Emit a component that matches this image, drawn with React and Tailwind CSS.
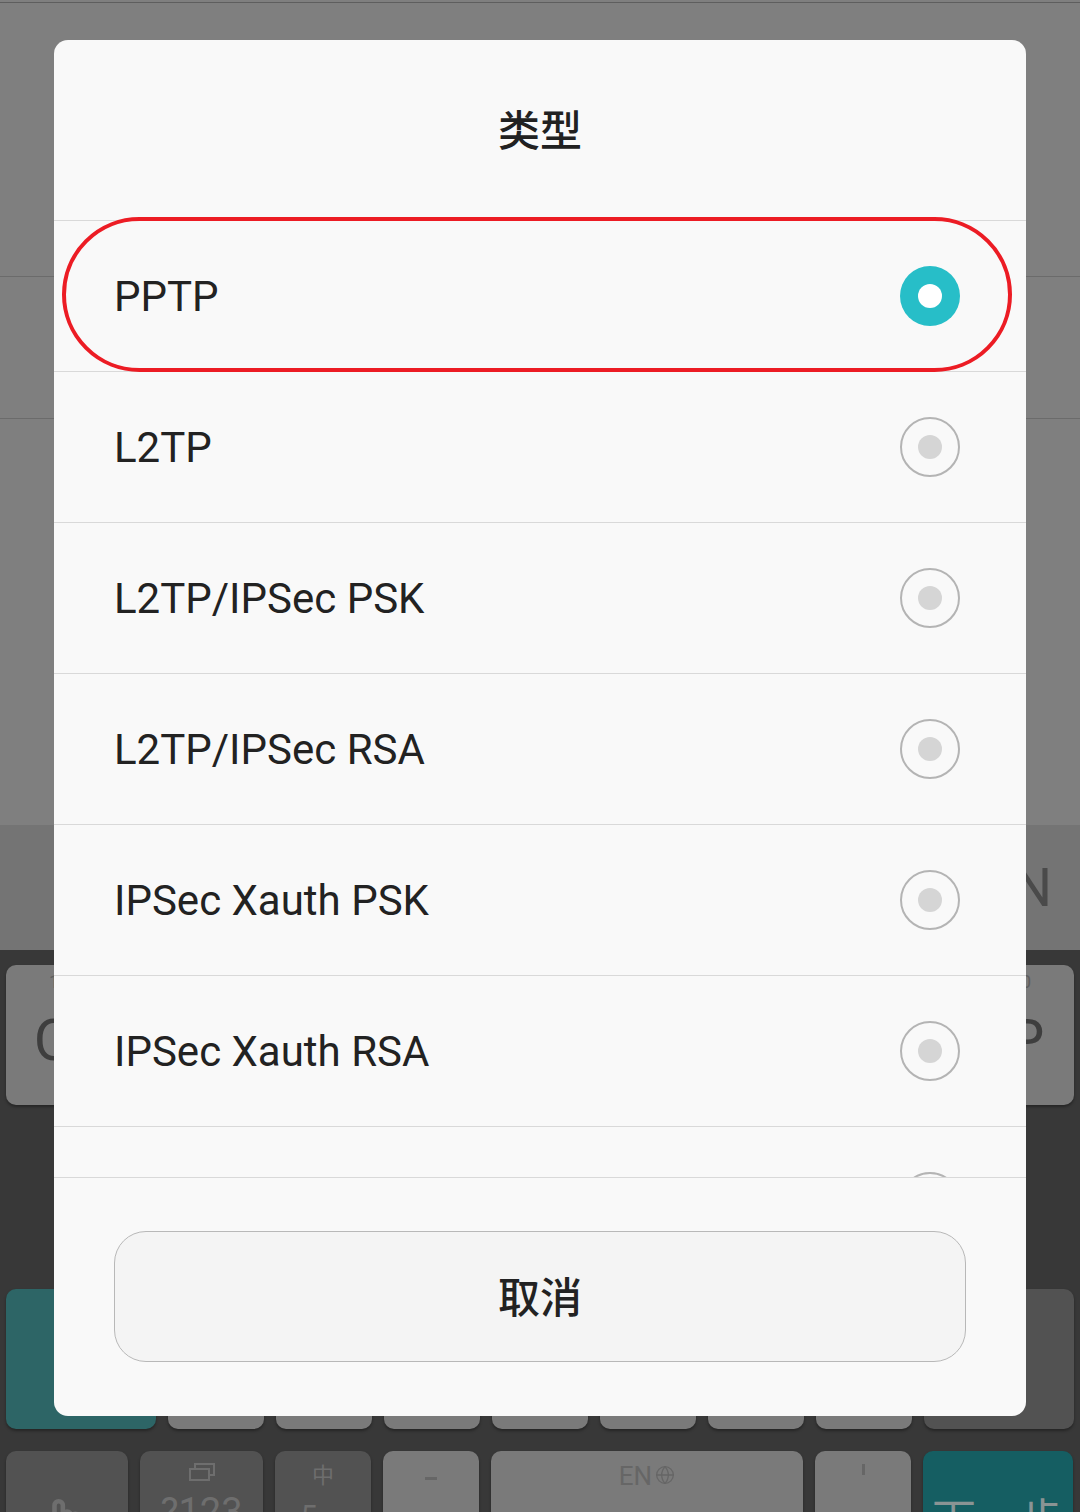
import { Delete, Pointer, Globe } from 'lucide-react';

const types = ['PPTP', 'L2TP', 'L2TP/IPSec PSK', 'L2TP/IPSec RSA', 'IPSec Xauth PSK', 'IPSec Xauth RSA', 'IPSec Hybrid RSA'];

const topRow = [
  ['Q', '1'], ['W', '2'], ['E', '3'], ['R', '4'], ['T', '5'],
  ['Y', '6'], ['U', '7'], ['I', '8'], ['O', '9'], ['P', '0'],
];

function Radio({ checked }) {
  if (checked) {
    return (
      <div className="flex h-[60px] w-[60px] items-center justify-center rounded-full bg-[#27bec8]">
        <div className="h-[24px] w-[24px] rounded-full bg-white" />
      </div>
    );
  }
  return (
    <div className="flex h-[60px] w-[60px] items-center justify-center rounded-full border-2 border-[#b4b4b4]">
      <div className="h-[24px] w-[24px] rounded-full bg-[#d5d5d5]" />
    </div>
  );
}

function Key({ className = '', children }) {
  return (
    <div className={`relative h-[140px] shrink-0 overflow-hidden rounded-[10px] shadow-[0_2px_3px_rgba(0,0,0,0.35)] ${className}`}>
      {children}
    </div>
  );
}

export default function App() {
  return (
    <div className="relative h-[1512px] w-[1080px] overflow-hidden bg-[#7f7f7f] font-['Roboto','Noto_Sans_CJK_SC',sans-serif]">
      {/* page behind the dialog */}
      <div className="flex h-full flex-col">
        <div className="h-[3px] shrink-0 border-b border-[#5e5e5e]" />
        <div className="h-[274px] shrink-0 border-b border-[#6b6b6b]" />
        <div className="h-[142px] shrink-0 border-b border-[#6b6b6b]" />
        <div className="h-[406px] shrink-0" />
        <div className="flex h-[125px] shrink-0 items-center justify-end bg-[#747474] pr-[28px] text-[54px] leading-none text-[#4a4a4a]">N</div>

        {/* keyboard */}
        <div className="flex shrink-0 flex-col gap-[22px] bg-[#383838] px-[6px] pt-[15px] pb-[20px]">
          <div className="flex gap-[12px]">
            {topRow.map(([l, n]) => (
              <Key key={l} className="flex-1 bg-[#7a7a7a]">
                <div className="pt-[8px] text-center text-[18px] leading-none text-[#5e5e5e]">{n}</div>
                <div className="pt-[20px] text-center text-[58px] leading-none text-[#3e3e3e]">{l}</div>
              </Key>
            ))}
          </div>
          <div className="flex justify-center gap-[12px]">
            {['A', 'S', 'D', 'F', 'G', 'H', 'J', 'K', 'L'].map((l) => (
              <Key key={l} className="w-[96px] bg-[#7a7a7a]" />
            ))}
          </div>
          <div className="flex gap-[12px]">
            <Key className="w-[150px] bg-[#2d6566]" />
            {['Z', 'X', 'C', 'V', 'B', 'N', 'M'].map((l) => (
              <Key key={l} className="w-[96px] bg-[#7a7a7a]" />
            ))}
            <Key className="flex w-[150px] items-center justify-center bg-[#525252]">
              <Delete size={60} strokeWidth={1.4} color="#6e6e6e" />
            </Key>
          </div>
          <div className="flex gap-[12px]">
            <Key className="flex w-[122px] justify-center bg-[#525252] pt-[46px]">
              <Pointer size={50} strokeWidth={2.2} color="#6e6e6e" />
            </Key>
            <Key className="flex w-[123px] flex-col items-center bg-[#525252] pt-[12px]">
              <svg width="26" height="18" viewBox="0 0 26 18" fill="none" stroke="#6e6e6e" strokeWidth="2">
                <rect x="1" y="6" width="19" height="11" />
                <path d="M6 6V1h19v11h-5" />
              </svg>
              <div className="pt-[12px] text-[38px] leading-none text-[#6e6e6e]">?123</div>
            </Key>
            <Key className="flex w-[96px] flex-col items-center bg-[#525252] pt-[14px]">
              <div className="text-[22px] leading-none text-[#6e6e6e]">中</div>
              <div className="pt-[14px] pr-[28px] text-[30px] leading-none text-[#6e6e6e]">5</div>
            </Key>
            <Key className="flex w-[96px] justify-center bg-[#7a7a7a] pt-[26px]">
              <div className="h-[3px] w-[12px] bg-[#666]" />
            </Key>
            <Key className="flex w-[312px] items-start justify-center gap-[3px] bg-[#7a7a7a] pt-[12px]">
              <span className="text-[26px] leading-none text-[#666]">EN</span>
              <Globe size={20} strokeWidth={1.6} color="#666" className="mt-[2px]" />
            </Key>
            <Key className="flex w-[96px] justify-center bg-[#7a7a7a] pt-[13px]">
              <div className="h-[11px] w-[3px] bg-[#666]" />
            </Key>
            <Key className="flex w-[150px] justify-center bg-[#155e62] pt-[48px]">
              <span className="text-[44px] leading-none text-[#8a9494]">下一步</span>
            </Key>
          </div>
        </div>
      </div>

      {/* dialog */}
      <div className="absolute left-[54px] top-[40px] flex h-[1376px] w-[972px] flex-col overflow-hidden rounded-[14px] bg-[#f9f9f9]">
        <div className="flex h-[181px] shrink-0 items-center justify-center border-b border-[#d9d9d9] pt-[3px] text-[42px] font-medium text-[#212121]">
          类型
        </div>
        <div className="h-[957px] shrink-0 overflow-hidden border-b border-[#d9d9d9]">
          {types.map((t, i) => (
            <div key={t} className="flex h-[151px] items-center justify-between border-b border-[#d9d9d9] pl-[60px] pr-[66px]">
              <span className="text-[42px] text-[#222]">{t}</span>
              <Radio checked={i === 0} />
            </div>
          ))}
        </div>
        <div className="px-[60px] pt-[53px]">
          <button className="flex h-[131px] w-full items-center justify-center rounded-[32px] border border-[#b8b8b8] bg-[#f4f4f4] pt-[3px] text-[42px] font-medium text-[#222]">
            取消
          </button>
        </div>
      </div>

      {/* red highlight */}
      <div className="absolute left-[62px] top-[217px] h-[155px] w-[950px] rounded-[80px] border-4 border-[#ec1c24]" />
    </div>
  );
}
